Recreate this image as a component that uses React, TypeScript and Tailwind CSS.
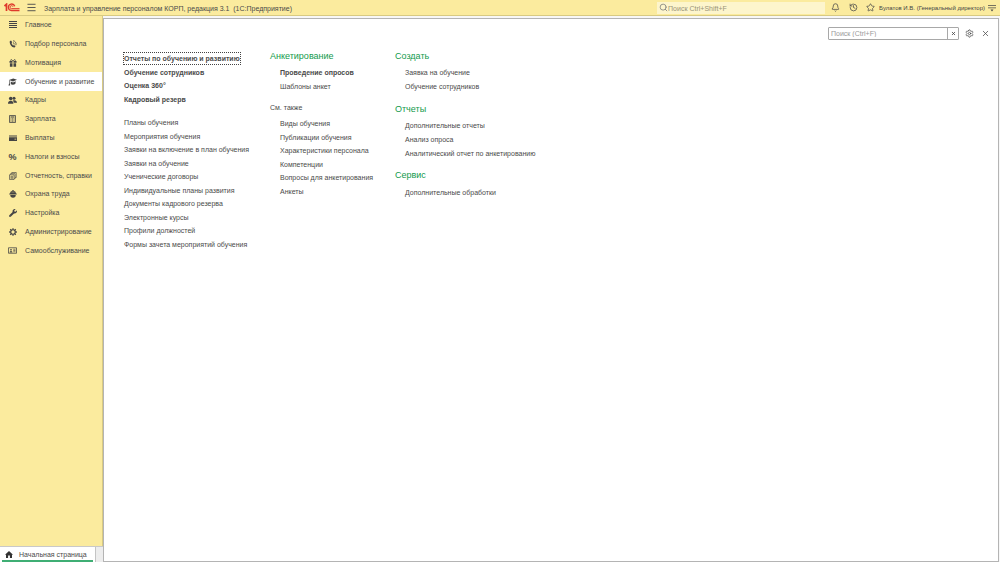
import type { ReactNode } from "react";
import { Bell, History, Menu, Search, Settings, Star, X } from "lucide-react";
import { FaWrench } from "react-icons/fa";

type Section = { label: string; icon: ReactNode; active?: boolean };
type Link = { label: string; bold?: boolean; focused?: boolean };

function LinesIcon() {
  return (
    <svg viewBox="0 0 8 8" className="size-2" stroke="currentColor" strokeWidth="1">
      <path d="M0 0.500h8M0 2.500h8M0 4.500h8M0 6.500h8" />
    </svg>
  );
}

function PhoneIcon() {
  return (
    <svg viewBox="0 0 16 16" className="size-2" fill="none" stroke="currentColor">
      <path
        d="M1.500 2.500L4 1l2.500 3.500L5 6.200c.4 2 1.500 3.600 3.200 4.600l1.900-1 3 3-2 2.200C6 15.500 .8 9 1.500 2.500z"
        fill="currentColor"
        stroke="none"
      />
      <path d="M8 5.200a3 3 0 0 1 2.200 3.800M8 1.500a6.600 6.600 0 0 1 5.700 9" strokeWidth="1.600" />
    </svg>
  );
}

function GiftIcon() {
  return (
    <svg viewBox="0 0 16 16" className="size-2" fill="none" stroke="currentColor">
      <path d="M7.500 4C5.500 0 2.500 1 3.500 3.500M8.500 4c2-4 5-3 4-.5" strokeWidth="1.800" />
      <path
        d="M1 4h6v3.500H1zM9 4h6v3.500H9zM1.800 8.500H7V15.500H1.800zM9 8.500h5.200v7H9z"
        fill="currentColor"
        stroke="none"
      />
    </svg>
  );
}

function CapIcon() {
  return (
    <svg viewBox="0 0 18 16" className="h-2 w-[9px]" fill="currentColor">
      <path d="M2 4l8.500-3L18 3.500 10 7z" />
      <path d="M5.500 6.800L10 8.800l5.500-2.400-.7 5.200c-2 2-6 2.600-9.300 1z" />
      <path d="M2.300 4.500h1.200v6l.9 4.500H1l1.300-4.500z" />
    </svg>
  );
}

function PeopleIcon() {
  return (
    <svg viewBox="0 0 18 16" className="h-2 w-[9px]" fill="currentColor">
      <circle cx="12" cy="4.500" r="3" />
      <path d="M11 8.500h3c2.500 1 4 2.500 4 5h-6.500c0-1.500-.8-2.800-2-3.800z" />
      <circle cx="5.500" cy="5" r="3.600" />
      <path d="M0 15.500c0-3.500 1.500-5.200 4-6h3c2.500.8 3.700 2.500 3.700 6z" />
    </svg>
  );
}

function CalculatorIcon() {
  return (
    <svg viewBox="0 0 14 16" className="h-2 w-[7px]" fill="none" stroke="currentColor">
      <path d="M1 1h12v14H1z" strokeWidth="1.600" />
      <path d="M3 4h8" strokeWidth="2.200" />
      <path d="M3 7.500h8M3 10h8M3 12.500h8" strokeWidth="1.500" strokeDasharray="2 1" />
    </svg>
  );
}

function WalletIcon() {
  return (
    <svg viewBox="0 0 16 12" className="h-1.5 w-2" fill="currentColor">
      <path d="M0 1h16v2.200H0zM0 4.400h16V12H0z" />
      <path d="M11 7.500h3.500v1.500H11z" fill="#fbeb9e" />
    </svg>
  );
}

function PagesIcon() {
  return (
    <svg viewBox="0 0 16 16" className="size-2" fill="none" stroke="currentColor" strokeWidth="1.3">
      <path d="M5.500 3.500v-2.500h9v10h-2.200M3.200 5.500v-2.200h9v10h-2.200" />
      <path d="M1 5.500h9v9.500h-9zM3 8.500h5M3 10.500h5M3 12.500h5" />
    </svg>
  );
}

function HelmetIcon() {
  return (
    <svg viewBox="0 0 16 16" className="size-2" fill="currentColor">
      <path d="M2 7a5.800 5.800 0 0 1 4.300-5.500V.7h3.400v.8A5.800 5.800 0 0 1 14 7h1.500v2H.5V7z" />
      <path d="M2.500 10h11a5.500 5.500 0 0 1-11 0z" />
      <path d="M6.300 2.500v3.500M9.700 2.500v3.500" stroke="#fbeb9e" strokeWidth=".7" />
    </svg>
  );
}

function GearIcon() {
  return (
    <svg viewBox="0 0 16 16" className="size-2" fill="none" stroke="currentColor">
      <circle cx="8" cy="8" r="4.500" strokeWidth="2.200" />
      <path
        d="M8 .3v3M8 12.700v3M.3 8h3M12.700 8h3M2.500 2.500l2.200 2.200M11.300 11.300l2.200 2.200M2.500 13.500l2.200-2.200M11.300 4.700l2.200-2.200"
        strokeWidth="2.600"
      />
    </svg>
  );
}

function CardIcon() {
  return (
    <svg viewBox="0 0 18 14" className="h-[7px] w-[9px]" fill="none" stroke="currentColor">
      <path d="M1 1.500h16v11H1z" strokeWidth="1.500" />
      <circle cx="6" cy="5.500" r="1.700" fill="currentColor" stroke="none" />
      <path d="M3 11a3 3 0 0 1 6 0z" fill="currentColor" stroke="none" />
      <path d="M10.500 4.500h4.500M10.500 7h4.500M10.500 9.500h4.500" strokeWidth="1.300" />
    </svg>
  );
}

function HomeIcon() {
  return (
    <svg viewBox="0 0 16 14" className="h-[7px] w-2 text-[#333]" fill="currentColor">
      <path d="M8 0l8 7.500h-2V14H9.800V9H6.200v5H2V7.500H0z" />
    </svg>
  );
}

function Logo() {
  return (
    <svg viewBox="0 0 32 18" className="h-[9px] w-4" fill="none" stroke="#de3a2c" aria-label="1C">
      <path d="M1 6l4-3.500v13.500" strokeWidth="3.400" />
      <path d="M21.500 6.500a6.500 6.500 0 1 0-6.500 8.500h16" strokeWidth="2.600" />
      <path d="M18 7.500a3 3 0 1 0-3 3.800h16" strokeWidth="2" />
    </svg>
  );
}

const sections: Section[] = [
  { label: "Главное", icon: <LinesIcon /> },
  { label: "Подбор персонала", icon: <PhoneIcon /> },
  { label: "Мотивация", icon: <GiftIcon /> },
  { label: "Обучение и развитие", icon: <CapIcon />, active: true },
  { label: "Кадры", icon: <PeopleIcon /> },
  { label: "Зарплата", icon: <CalculatorIcon /> },
  { label: "Выплаты", icon: <WalletIcon /> },
  { label: "Налоги и взносы", icon: <span className="text-[9px] font-bold">%</span> },
  { label: "Отчетность, справки", icon: <PagesIcon /> },
  { label: "Охрана труда", icon: <HelmetIcon /> },
  { label: "Настройка", icon: <FaWrench className="size-2" /> },
  { label: "Администрирование", icon: <GearIcon /> },
  { label: "Самообслуживание", icon: <CardIcon /> },
];

const mainLinks: Link[] = [
  { label: "Отчеты по обучению и развитию", bold: true, focused: true },
  { label: "Обучение сотрудников", bold: true },
  { label: "Оценка 360°", bold: true },
  { label: "Кадровый резерв", bold: true },
];

const planLinks: Link[] = [
  { label: "Планы обучения" },
  { label: "Мероприятия обучения" },
  { label: "Заявки на включение в план обучения" },
  { label: "Заявки на обучение" },
  { label: "Ученические договоры" },
  { label: "Индивидуальные планы развития" },
  { label: "Документы кадрового резерва" },
  { label: "Электронные курсы" },
  { label: "Профили должностей" },
  { label: "Формы зачета мероприятий обучения" },
];

const surveyLinks: Link[] = [
  { label: "Проведение опросов", bold: true },
  { label: "Шаблоны анкет" },
];

const seeAlsoLinks: Link[] = [
  { label: "Виды обучения" },
  { label: "Публикации обучения" },
  { label: "Характеристики персонала" },
  { label: "Компетенции" },
  { label: "Вопросы для анкетирования" },
  { label: "Анкеты" },
];

const createLinks: Link[] = [{ label: "Заявка на обучение" }, { label: "Обучение сотрудников" }];

const reportLinks: Link[] = [
  { label: "Дополнительные отчеты" },
  { label: "Анализ опроса" },
  { label: "Аналитический отчет по анкетированию" },
];

const serviceLinks: Link[] = [{ label: "Дополнительные обработки" }];

function LinkList({ links, className = "" }: { links: Link[]; className?: string }) {
  return (
    <ul className={`grid ${className}`}>
      {links.map((link) => (
        <li key={link.label} className="flex items-center">
          <a
            href="#"
            className={`whitespace-nowrap leading-[11px] ${link.bold ? "font-bold" : ""} ${
              link.focused ? "outline-1 outline-dotted outline-[#444]" : ""
            }`}
          >
            {link.label}
          </a>
        </li>
      ))}
    </ul>
  );
}

function GroupTitle({ children }: { children: ReactNode }) {
  return <h2 className="text-[9px] leading-3 text-[#129a4c]">{children}</h2>;
}

export default function App() {
  return (
    <div className="flex h-screen flex-col overflow-hidden bg-[#f7f7f7] font-['Liberation_Sans',Arial,sans-serif] text-[7px] text-[#4a4a4a]">
      {/* Title bar */}
      <header className="flex h-4 shrink-0 items-center border-b border-[#d8ca82] bg-[#fbeb9e] pl-1">
        <Logo />
        <button type="button" aria-label="Меню" className="ml-1.5">
          <Menu className="size-[11px]" strokeWidth={2} />
        </button>
        <h1 className="ml-[7px] pt-0.5 leading-[10px] whitespace-pre">
          Зарплата и управление персоналом КОРП, редакция 3.1  (1С:Предприятие)
        </h1>
        <label className="ml-auto flex h-3 w-[168px] items-center bg-[#fdf5cc] pl-0.5">
          <Search className="size-[9px] shrink-0 text-[#777]" strokeWidth={2} />
          <input
            type="search"
            aria-label="Поиск"
            placeholder="Поиск Ctrl+Shift+F"
            className="min-w-0 flex-1 pt-0.5 leading-[10px] outline-none placeholder:text-[#9a9478]"
          />
        </label>
        <button type="button" aria-label="Уведомления" className="ml-1.5">
          <Bell className="size-[9px]" strokeWidth={2} />
        </button>
        <button type="button" aria-label="История" className="ml-[9px]">
          <History className="size-[9px]" strokeWidth={2} />
        </button>
        <button type="button" aria-label="Избранное" className="ml-2">
          <Star className="size-[9px]" strokeWidth={2} />
        </button>
        <button type="button" className="ml-1 pt-px text-[6px] whitespace-nowrap text-[#444]">
          Булатов И.В. (Генеральный директор)
        </button>
        <button type="button" aria-label="Настройки окна" className="mr-1 ml-[3px]">
          <svg viewBox="0 0 8 8" className="size-2" fill="currentColor">
            <path d="M0 1h8v.8H0zM0 3.500h8v.8H0zM2.500 5.500h3L4 7.500z" />
          </svg>
        </button>
      </header>

      <div className="flex min-h-0 flex-1">
        {/* Sections */}
        <aside className="flex w-[103px] shrink-0 flex-col">
          <nav className="flex-1 border-r border-[#d8ca82] bg-[#fbeb9e]">
            <ul className="grid min-h-[244px]">
              {sections.map((section) => (
                <li key={section.label} className="grid">
                  <a
                    href="#"
                    className={`flex items-center pl-2 leading-[18px] ${section.active ? "bg-white" : ""}`}
                  >
                    <span className="flex w-[9px] shrink-0 justify-center text-[#444]">{section.icon}</span>
                    <span className="ml-2 whitespace-nowrap">{section.label}</span>
                  </a>
                </li>
              ))}
            </ul>
          </nav>
          <div className="flex h-4 border-t border-[#c9c9c9] bg-[#ededed]">
            <button
              type="button"
              className="flex w-24 border-r border-[#c4c4c4] bg-white px-0.5"
            >
              <span className="flex h-full flex-1 items-center border-b-2 border-[#3fae74] pt-0.5 pl-[3px]">
                <HomeIcon />
                <span className="ml-1.5 leading-[10px] whitespace-nowrap">Начальная страница</span>
              </span>
            </button>
          </div>
        </aside>

        {/* Functions panel */}
        <main className="flex min-w-0 flex-1 pt-0.5 pr-px">
          <div className="min-w-0 flex-1 border border-[#b4b4b4] bg-white">
            <div className="flex items-center justify-end pt-2 pr-2">
              <div className="flex h-[13px] w-[131px] rounded-[1px] border border-[#a8a8a8]">
                <input
                  type="text"
                  aria-label="Поиск по разделу"
                  placeholder="Поиск (Ctrl+F)"
                  className="min-w-0 flex-1 pt-px pl-0.5 outline-none placeholder:text-[#9a9a9a]"
                />
                <button
                  type="button"
                  aria-label="Очистить"
                  className="flex w-[11px] items-center justify-center border-l border-[#a8a8a8]"
                >
                  <X className="size-[5px]" strokeWidth={4} />
                </button>
              </div>
              <button type="button" aria-label="Настройка" className="ml-1.5">
                <Settings className="size-[9px]" strokeWidth={2} />
              </button>
              <button type="button" aria-label="Закрыть" className="ml-[7px]">
                <X className="size-[9px]" strokeWidth={2} />
              </button>
            </div>

            <div className="flex pt-2.5 pl-5">
              <div className="w-[146px] shrink-0 pt-0.5">
                <LinkList links={mainLinks} className="min-h-[54px]" />
                <LinkList links={planLinks} className="mt-2.5 min-h-[135px]" />
              </div>

              <div className="w-[125px] shrink-0">
                <GroupTitle>Анкетирование</GroupTitle>
                <LinkList links={surveyLinks} className="mt-1 min-h-[27px] pl-2.5" />
                <h3 className="mt-[9px] leading-3">См. также</h3>
                <LinkList links={seeAlsoLinks} className="mt-[3px] min-h-[81px] pl-2.5" />
              </div>

              <div>
                <GroupTitle>Создать</GroupTitle>
                <LinkList links={createLinks} className="mt-1 min-h-[27px] pl-2.5" />
                <div className="mt-2.5">
                  <GroupTitle>Отчеты</GroupTitle>
                </div>
                <LinkList links={reportLinks} className="mt-1 min-h-[41px] pl-2.5" />
                <div className="mt-[9px]">
                  <GroupTitle>Сервис</GroupTitle>
                </div>
                <LinkList links={serviceLinks} className="mt-1 min-h-[14px] pl-2.5" />
              </div>
            </div>
          </div>
        </main>
      </div>
    </div>
  );
}
